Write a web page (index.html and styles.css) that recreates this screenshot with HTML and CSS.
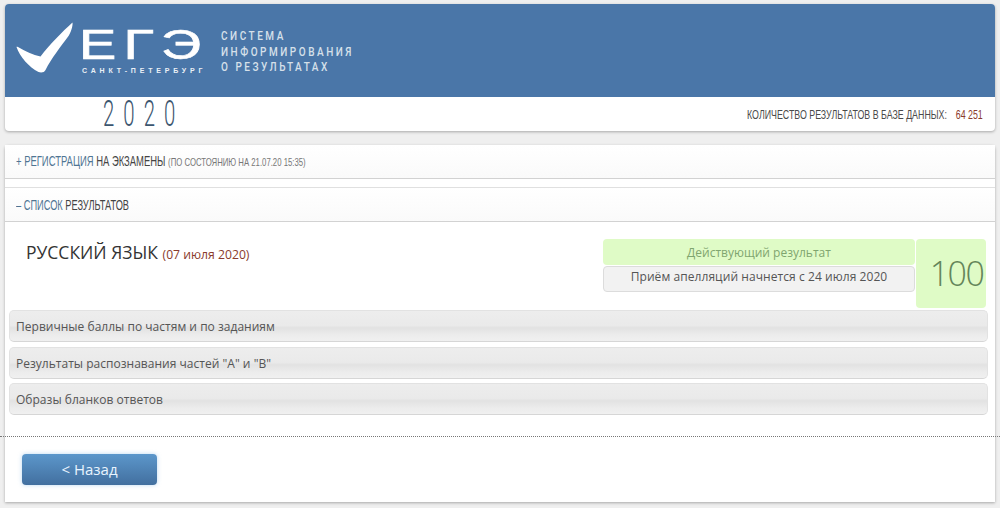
FILE: index.html
```html
<!DOCTYPE html>
<html lang="ru">
<head>
<meta charset="utf-8">
<title>ЕГЭ Санкт-Петербург</title>
<link rel="stylesheet" href="styles.css">
</head>
<body>
<header class="card top">
  <div class="banner">
    <svg class="check" viewBox="0 0 57 51" aria-hidden="true"><path d="M0.5 25 C0.5 24.5 1 24.5 2 25 C9 29 17 33 24.5 34.5 C34 22 46 10 56.5 0.5 C57 4 55 10 52.5 14 C45 24 35 37 29.5 48 C28.5 50.5 25 51 22.5 50 C13 45 4 35 0.5 25 Z" fill="#fff"/></svg>
    <div class="brand">
      <div class="ege">ЕГЭ</div>
      <div class="city">САНКТ-ПЕТЕРБУРГ</div>
    </div>
    <div class="system">СИСТЕМА<br>ИНФОРМИРОВАНИЯ<br>О РЕЗУЛЬТАТАХ</div>
  </div>
  <div class="subbar">
    <div class="year">2020</div>
    <div class="count"><span class="narrow label">КОЛИЧЕСТВО РЕЗУЛЬТАТОВ В БАЗЕ ДАННЫХ:</span><span class="narrow num">64 251</span></div>
  </div>
</header>
<main class="card content">
  <div class="section"><span class="narrow head"><span class="blue">+ РЕГИСТРАЦИЯ</span> <span class="dark">НА ЭКЗАМЕНЫ</span> <span class="small">(ПО СОСТОЯНИЮ НА 21.07.20 15:35)</span></span></div>
  <div class="section second"><span class="narrow head"><span class="blue">– СПИСОК</span> <span class="dark">РЕЗУЛЬТАТОВ</span></span></div>
  <div class="result">
    <div class="subject">РУССКИЙ ЯЗЫК <span class="date">(07 июля 2020)</span></div>
    <div class="status">
      <div class="status-col">
        <div class="pill active">Действующий результат</div>
        <div class="pill appeal">Приём апелляций начнется с 24 июля 2020</div>
      </div>
      <div class="score">100</div>
    </div>
  </div>
  <div class="bars">
    <div class="bar">Первичные баллы по частям и по заданиям</div>
    <div class="bar">Результаты распознавания частей "А" и "В"</div>
    <div class="bar">Образы бланков ответов</div>
  </div>
  <div class="footer">
    <button class="back" type="button">&lt; Назад</button>
  </div>
</main>
</body>
</html>
```
FILE: styles.css
```css
* { box-sizing: border-box; }
html, body { height: 100%; }
body {
  margin: 0;
  padding: 4px 5px 0;
  background: #efefef;
  font-family: "Open Sans", "Noto Sans", sans-serif;
  overflow: hidden;
}
.card {
  background: #fff;
  border-radius: 4px;
  box-shadow: 0 1px 3px rgba(0,0,0,.3);
}
.top { height: 127px; }
.banner {
  height: 93px;
  background: #4a76a8;
  border-radius: 4px 4px 0 0;
  display: flex;
  align-items: flex-start;
  color: #fff;
}
.check { width: 57px; height: 51px; margin: 18px 0 0 11px; flex: none; }
.brand { margin: 19px 0 0 9px; width: 125px; flex: none; }
.ege {
  font: 400 43px/43px "Liberation Sans", sans-serif;
  letter-spacing: 5.6px;
  -webkit-text-stroke: .7px #fff;
  transform: scaleX(1.3);
  transform-origin: left top;
  white-space: nowrap;
  height: 42px;
  margin-left: -3px;
}
.city {
  font: 700 7px/9px "Liberation Sans", sans-serif;
  letter-spacing: 3.8px;
  margin-top: 1px;
  white-space: nowrap;
  color: #eaf0f6;
}
.system {
  margin: 24px 0 0 14px;
  font: 500 12.5px/15.5px Roboto, sans-serif;
  letter-spacing: 3.15px;
  color: #d6e0ea;
  white-space: nowrap;
  transform: scaleX(.8);
  transform-origin: left top;
}
.subbar {
  height: 34px;
  display: flex;
  justify-content: space-between;
  padding-right: 12px;
}
.year {
  margin-left: 98px;
  font: 300 37px/34px Roboto, sans-serif;
  letter-spacing: 16.5px;
  color: #3c566f;
  transform: scaleX(.55);
  transform-origin: left center;
}
.count { display: flex; align-items: center; padding-top: 1px; }
.narrow {
  display: inline-block;
  font-family: "Liberation Sans", sans-serif;
  font-size: 13px;
  white-space: nowrap;
  color: #4a4a4a;
  transform: scaleX(.68);
  transform-origin: right center;
}
.label { margin-left: -94px; }
.num { color: #8a3b2c; margin-left: -4px; }
.content {
  height: 357px;
  margin-top: 14px;
  border-radius: 4px 4px 0 0;
  display: flex;
  flex-direction: column;
}
.section {
  height: 34px;
  padding: 0 0 1px 11px;
  display: flex;
  align-items: center;
  background: linear-gradient(#fff, #fafafa);
  border-bottom: 1px solid #d2d2d2;
}
.section.second { margin-top: 8px; border-top: 1px solid #e0e0e0; height: 35px; padding-bottom: 0; }
.head { font-size: 14px; transform: scaleX(.675); transform-origin: left center; }
.second .head { transform: scaleX(.66); }
.blue { color: #4f7593; }
.dark { color: #444; }
.small { color: #777; font-size: 11.5px; }
.result {
  height: 88px;
  padding: 17px 9px 0 21px;
  display: flex;
  justify-content: space-between;
  align-items: flex-start;
}
.subject { font-size: 17.5px; line-height: 24px; color: #333; padding-top: 1px; }
.date { font-size: 12.2px; color: #8a3b2c; }
.status { display: flex; gap: 1px; }
.status-col { width: 312px; display: flex; flex-direction: column; gap: 1px; }
.pill {
  height: 26px;
  border-radius: 4px;
  text-align: center;
  font-size: 12px;
  line-height: 27px;
}
.active { background: #dffbc6; color: #7fa56f; }
.appeal { background: #f2f2f2; color: #555; border: 1px solid #dcdcdc; line-height: 19px; letter-spacing: .07px; }
.score {
  width: 70px;
  height: 69px;
  border-radius: 4px;
  background: #dffbc6;
  color: #63855a;
  font-size: 34px;
  font-weight: 300;
  letter-spacing: -1.5px;
  text-align: center;
  line-height: 69px;
  padding-left: 11px;
}
.bars { padding: 0 7px 0 4px; display: flex; flex-direction: column; gap: 4.5px; }
.bar {
  height: 32px;
  border-radius: 5px;
  padding: 1px 6px 0;
  display: flex;
  align-items: center;
  font-size: 12px;
  letter-spacing: .02px;
  color: #555;
  border: 1px solid #e2e2e2;
  border-bottom-color: #d6d6d6;
  background: linear-gradient(#ededed 0%, #eaeaea 48%, #e2e2e2 56%, #ececec 80%, #f0f0f0 100%);
}
.footer {
  flex: 1;
  margin: 21px 0 0 -5px;
  width: 1000px;
  border-top: 1px dotted #777;
  padding: 17px 0 0 22px;
}
.back {
  width: 135px;
  height: 31px;
  border: 0;
  border-radius: 4px;
  background: linear-gradient(#5c97cb, #426f9f);
  box-shadow: 0 0 4px rgba(120,180,230,.5);
  color: #e8f4ff;
  font: 400 15px/31px "Open Sans", sans-serif;
  padding: 0;
}
```
